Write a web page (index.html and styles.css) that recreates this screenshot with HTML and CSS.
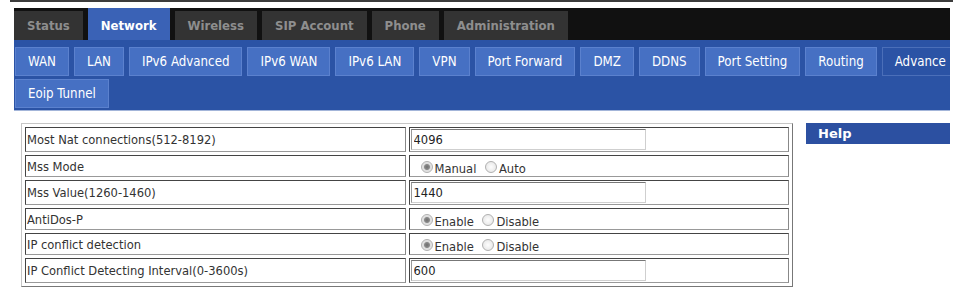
FILE: index.html
```html
<!DOCTYPE html>
<html lang="en">
<head>
  <meta charset="UTF-8" />
  <title>Network - Advance</title>
  <link rel="stylesheet" href="styles.css">
</head>
<body>
  <div class="topline"></div>
  <div class="page">
    <div class="mainnav">
      <div class="mtab">Status</div>
      <div class="mtab active">Network</div>
      <div class="mtab">Wireless</div>
      <div class="mtab">SIP Account</div>
      <div class="mtab">Phone</div>
      <div class="mtab">Administration</div>
    </div>

    <div class="subnav">
      <div class="subrow">
        <div class="stab">WAN</div>
        <div class="stab">LAN</div>
        <div class="stab">IPv6 Advanced</div>
        <div class="stab">IPv6 WAN</div>
        <div class="stab">IPv6 LAN</div>
        <div class="stab">VPN</div>
        <div class="stab">Port Forward</div>
        <div class="stab">DMZ</div>
        <div class="stab">DDNS</div>
        <div class="stab">Port Setting</div>
        <div class="stab">Routing</div>
        <div class="stab active">Advance</div>
      </div>
      <div class="subrow">
        <div class="stab">Eoip Tunnel</div>
      </div>
    </div>

    <div class="content">
      <table class="form">
        <tr>
          <td>Most Nat connections(512-8192)</td>
          <td><input type="text" value="4096"></td>
        </tr>
        <tr>
          <td>Mss Mode</td>
          <td class="radios">
            <input type="radio" name="mss" checked><span>Manual</span>
            <input type="radio" name="mss"><span>Auto</span>
          </td>
        </tr>
        <tr>
          <td>Mss Value(1260-1460)</td>
          <td><input type="text" value="1440"></td>
        </tr>
        <tr>
          <td>AntiDos-P</td>
          <td class="radios">
            <input type="radio" name="antidos" checked><span>Enable</span>
            <input type="radio" name="antidos"><span>Disable</span>
          </td>
        </tr>
        <tr>
          <td>IP conflict detection</td>
          <td class="radios">
            <input type="radio" name="ipconf" checked><span>Enable</span>
            <input type="radio" name="ipconf"><span>Disable</span>
          </td>
        </tr>
        <tr>
          <td>IP Conflict Detecting Interval(0-3600s)</td>
          <td><input type="text" value="600"></td>
        </tr>
      </table>

      <div class="help">Help</div>
    </div>
  </div>
</body>
</html>
```

FILE: styles.css
```css
body { margin: 0; font-family: "DejaVu Sans Condensed", "Liberation Sans", sans-serif; font-size: 12.8px; color: #333; background: #fff; }
.topline { height: 2px; margin: 0 4px 6px 10px; background: #3c3c3c; }
.page { width: 936px; margin-left: 14px; }

.mainnav { display: flex; align-items: flex-end; gap: 5px; height: 32px; background: #111; }
.mtab { height: 29px; line-height: 29px; padding: 0 13px; background: #333; color: #8e8e8e; font-weight: bold; font-size: 13px; }
.mtab.active { padding-top: 3px; background: #3a62b6; color: #fff; }

.subnav { background: #2b53a5; padding: 7px 0 2px 1px; border-bottom: 1px solid #a3b5d9; overflow: hidden; font-size: 13.2px; }
.subrow { display: flex; gap: 5px; white-space: nowrap; }
.subrow + .subrow { margin-top: 3px; }
.stab { height: 27px; line-height: 27px; padding: 0 12px; background: #4670c3; border: 1px solid #5b81ce; color: #fff; }
.stab.active { background: #2b53a5; border-color: #4b6fb9; }

.content { display: flex; align-items: flex-start; gap: 13px; padding: 12px 0 0 7px; }
.form { width: 772px; border-collapse: separate; border-spacing: 3px; border: 1px solid; border-color: #c6c6c6 #777 #777 #c6c6c6; }
.form td { width: 50%; padding: 1px; border: 1px solid; border-color: #444 #888 #999 #444; height: 18px; white-space: nowrap; }
.form input[type=text] { box-sizing: border-box; width: 235px; height: 21px; margin: 0; padding: 0 2px; border: 1px solid; border-color: #777 #cfcfcf #cfcfcf #999; font: inherit; color: #222; vertical-align: middle; }
.radios span { position: relative; top: 2px; }
.radios input[type=radio] { appearance: none; -webkit-appearance: none; width: 12px; height: 12px; margin: 0 2px 0 10px; border: 1px solid #b0b0b0; border-radius: 50%; background: radial-gradient(circle, #fdfdfd 0, #e2e2e2 100%); vertical-align: middle; }
.radios span + input[type=radio] { margin-left: 5px; }
.radios input[type=radio]:checked { background: radial-gradient(circle, #6e6e6e 0, #8a8a8a 2.5px, #dcdcdc 3.5px, #f6f6f6 100%); }

.help { flex: 1; height: 21px; line-height: 21px; padding-left: 12px; background: #2c50a1; color: #fff; font-family: "DejaVu Sans", sans-serif; font-weight: bold; font-size: 13px; }
```
